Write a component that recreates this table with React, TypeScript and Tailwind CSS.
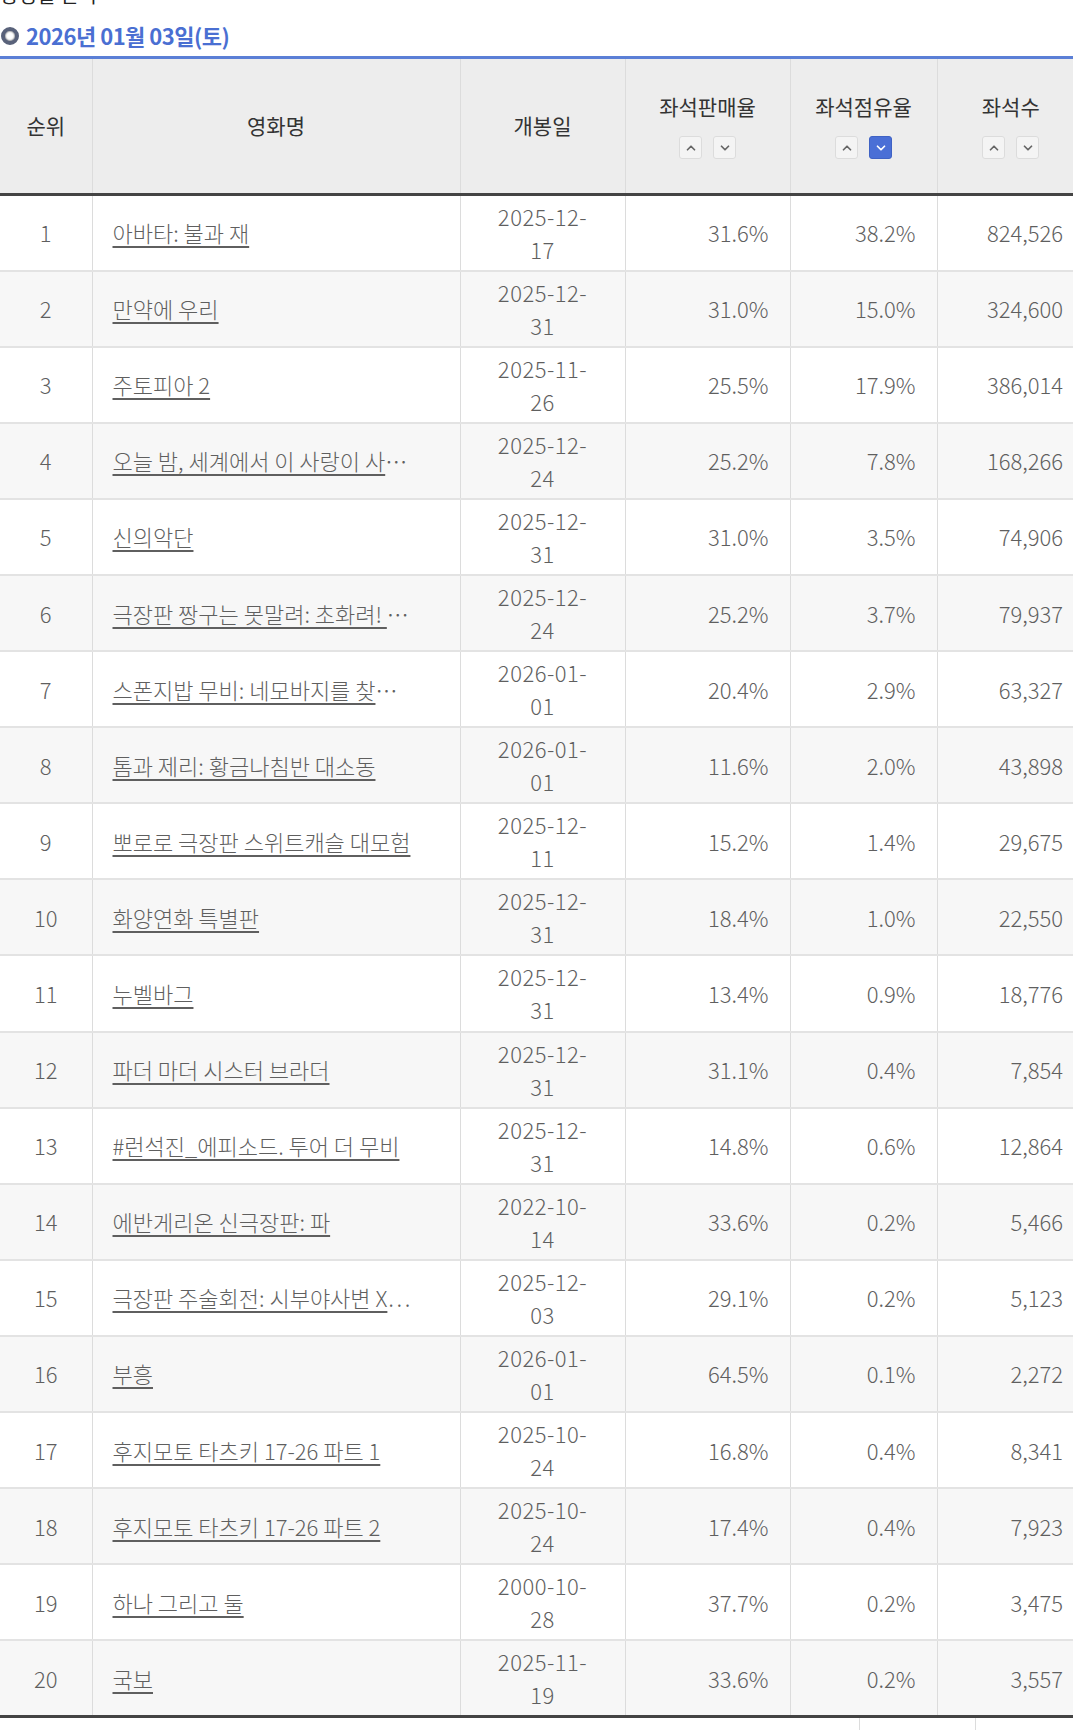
import { ChevronUp, ChevronDown } from 'lucide-react';

type Row = { rank: number; title: string; tail?: string; open: string; sales: string; share: string; seats: string };

const rows: Row[] = [
  { rank: 1, title: '아바타: 불과 재', open: '2025-12-17', sales: '31.6%', share: '38.2%', seats: '824,526' },
  { rank: 2, title: '만약에 우리', open: '2025-12-31', sales: '31.0%', share: '15.0%', seats: '324,600' },
  { rank: 3, title: '주토피아 2', open: '2025-11-26', sales: '25.5%', share: '17.9%', seats: '386,014' },
  { rank: 4, title: '오늘 밤, 세계에서 이 사랑이 사', tail: '…', open: '2025-12-24', sales: '25.2%', share: '7.8%', seats: '168,266' },
  { rank: 5, title: '신의악단', open: '2025-12-31', sales: '31.0%', share: '3.5%', seats: '74,906' },
  { rank: 6, title: '극장판 짱구는 못말려: 초화려! ', tail: '…', open: '2025-12-24', sales: '25.2%', share: '3.7%', seats: '79,937' },
  { rank: 7, title: '스폰지밥 무비: 네모바지를 찾', tail: '…', open: '2026-01-01', sales: '20.4%', share: '2.9%', seats: '63,327' },
  { rank: 8, title: '톰과 제리: 황금나침반 대소동', open: '2026-01-01', sales: '11.6%', share: '2.0%', seats: '43,898' },
  { rank: 9, title: '뽀로로 극장판 스위트캐슬 대모험', open: '2025-12-11', sales: '15.2%', share: '1.4%', seats: '29,675' },
  { rank: 10, title: '화양연화 특별판', open: '2025-12-31', sales: '18.4%', share: '1.0%', seats: '22,550' },
  { rank: 11, title: '누벨바그', open: '2025-12-31', sales: '13.4%', share: '0.9%', seats: '18,776' },
  { rank: 12, title: '파더 마더 시스터 브라더', open: '2025-12-31', sales: '31.1%', share: '0.4%', seats: '7,854' },
  { rank: 13, title: '#런석진_에피소드. 투어 더 무비', open: '2025-12-31', sales: '14.8%', share: '0.6%', seats: '12,864' },
  { rank: 14, title: '에반게리온 신극장판: 파', open: '2022-10-14', sales: '33.6%', share: '0.2%', seats: '5,466' },
  { rank: 15, title: '극장판 주술회전: 시부야사변 X', tail: '…', open: '2025-12-03', sales: '29.1%', share: '0.2%', seats: '5,123' },
  { rank: 16, title: '부흥', open: '2026-01-01', sales: '64.5%', share: '0.1%', seats: '2,272' },
  { rank: 17, title: '후지모토 타츠키 17-26 파트 1', open: '2025-10-24', sales: '16.8%', share: '0.4%', seats: '8,341' },
  { rank: 18, title: '후지모토 타츠키 17-26 파트 2', open: '2025-10-24', sales: '17.4%', share: '0.4%', seats: '7,923' },
  { rank: 19, title: '하나 그리고 둘', open: '2000-10-28', sales: '37.7%', share: '0.2%', seats: '3,475' },
  { rank: 20, title: '국보', open: '2025-11-19', sales: '33.6%', share: '0.2%', seats: '3,557' },
];

function SortButtons({ active }: { active?: 'up' | 'down' }) {
  const base = 'w-[23px] h-[23px] rounded-[3px] border flex items-center justify-center';
  return (
    <div className="flex justify-center gap-[11px] mt-[14px]">
      <span className={`${base} ${active === 'up' ? 'bg-[#4a6fd6] border-[#3f62c4] text-white' : 'bg-[#f4f4f4] border-[#dcdcdc] text-[#666]'}`}>
        <ChevronUp size={14} strokeWidth={3} />
      </span>
      <span className={`${base} ${active === 'down' ? 'bg-[#4a6fd6] border-[#3f62c4] text-white' : 'bg-[#f4f4f4] border-[#dcdcdc] text-[#666]'}`}>
        <ChevronDown size={14} strokeWidth={3} />
      </span>
    </div>
  );
}

export default function App() {
  const font = "font-['Noto_Sans_CJK_KR','Noto_Sans',sans-serif]";
  return (
    <div className={`w-[1073px] overflow-hidden bg-white ${font}`}>
      <div className="h-[8px] overflow-hidden">
        <div className="-mt-[17px] text-[20px] leading-[24px] text-[#222]">상영일 선택</div>
      </div>

      <div className="h-[48px] flex items-center pt-[7px] gap-[7px]">
        <span className="ml-[1px] w-[18px] h-[18px] rounded-full border-[4px] border-[#59627a] bg-white shadow-[inset_0_0_2px_#333]" />
        <h2 className="text-[22px] font-bold text-[#4a6fd2] tracking-[-0.5px]">2026년 01월 03일(토)</h2>
      </div>

      <table className="w-[1084px] table-fixed border-collapse">
        <colgroup>
          <col className="w-[92px]" />
          <col className="w-[368px]" />
          <col className="w-[165px]" />
          <col className="w-[165px]" />
          <col className="w-[147px]" />
          <col className="w-[147px]" />
        </colgroup>
        <thead>
          <tr className="h-[137px] bg-[#ededed] border-t-[3px] border-t-[#5b7fd6] border-b-[3px] border-b-[#444] text-[21px] text-[#333] font-normal">
            <th className="font-normal border-r border-[#dcdcdc]">순위</th>
            <th className="font-normal border-r border-[#dcdcdc]">영화명</th>
            <th className="font-normal border-r border-[#dcdcdc]">개봉일</th>
            <th className="font-normal border-r border-[#dcdcdc]">
              <div className="-mt-[2px]">좌석판매율</div>
              <SortButtons />
            </th>
            <th className="font-normal border-r border-[#dcdcdc]">
              <div className="-mt-[2px]">좌석점유율</div>
              <SortButtons active="down" />
            </th>
            <th className="font-normal">
              <div className="-mt-[2px]">좌석수</div>
              <SortButtons />
            </th>
          </tr>
        </thead>
        <tbody className="text-[22px] font-light text-[#5f5f5f]">
          {rows.map((r) => (
            <tr key={r.rank} className={`h-[76.1px] border-b-2 border-[#e3e3e3] last:border-b-[3px] last:border-b-[#444] ${r.rank % 2 === 0 ? 'bg-[#f7f7f7]' : 'bg-white'}`}>
              <td className="text-center border-r border-[#dcdcdc]">{r.rank}</td>
              <td className="pl-[20px] border-r border-[#dcdcdc] whitespace-nowrap">
                <span className="underline underline-offset-[4px]">{r.title}</span>
                {r.tail}
              </td>
              <td className="text-center leading-[33px] border-r border-[#dcdcdc] tracking-[0.5px]">
                <div>{r.open.slice(0, 8)}</div>
                <div>{r.open.slice(8)}</div>
              </td>
              <td className="text-right pr-[21px] border-r border-[#dcdcdc]">{r.sales}</td>
              <td className="text-right pr-[21px] border-r border-[#dcdcdc]">{r.share}</td>
              <td className="text-right pr-[21px]">{r.seats}</td>
            </tr>
          ))}
        </tbody>
      </table>

      <div className="flex justify-end pr-[97px]">
        <div className="w-[117px] h-[30px] border-x border-[#dcdcdc] text-center text-[20px] text-[#444] pt-[6px]">1</div>
      </div>
    </div>
  );
}
